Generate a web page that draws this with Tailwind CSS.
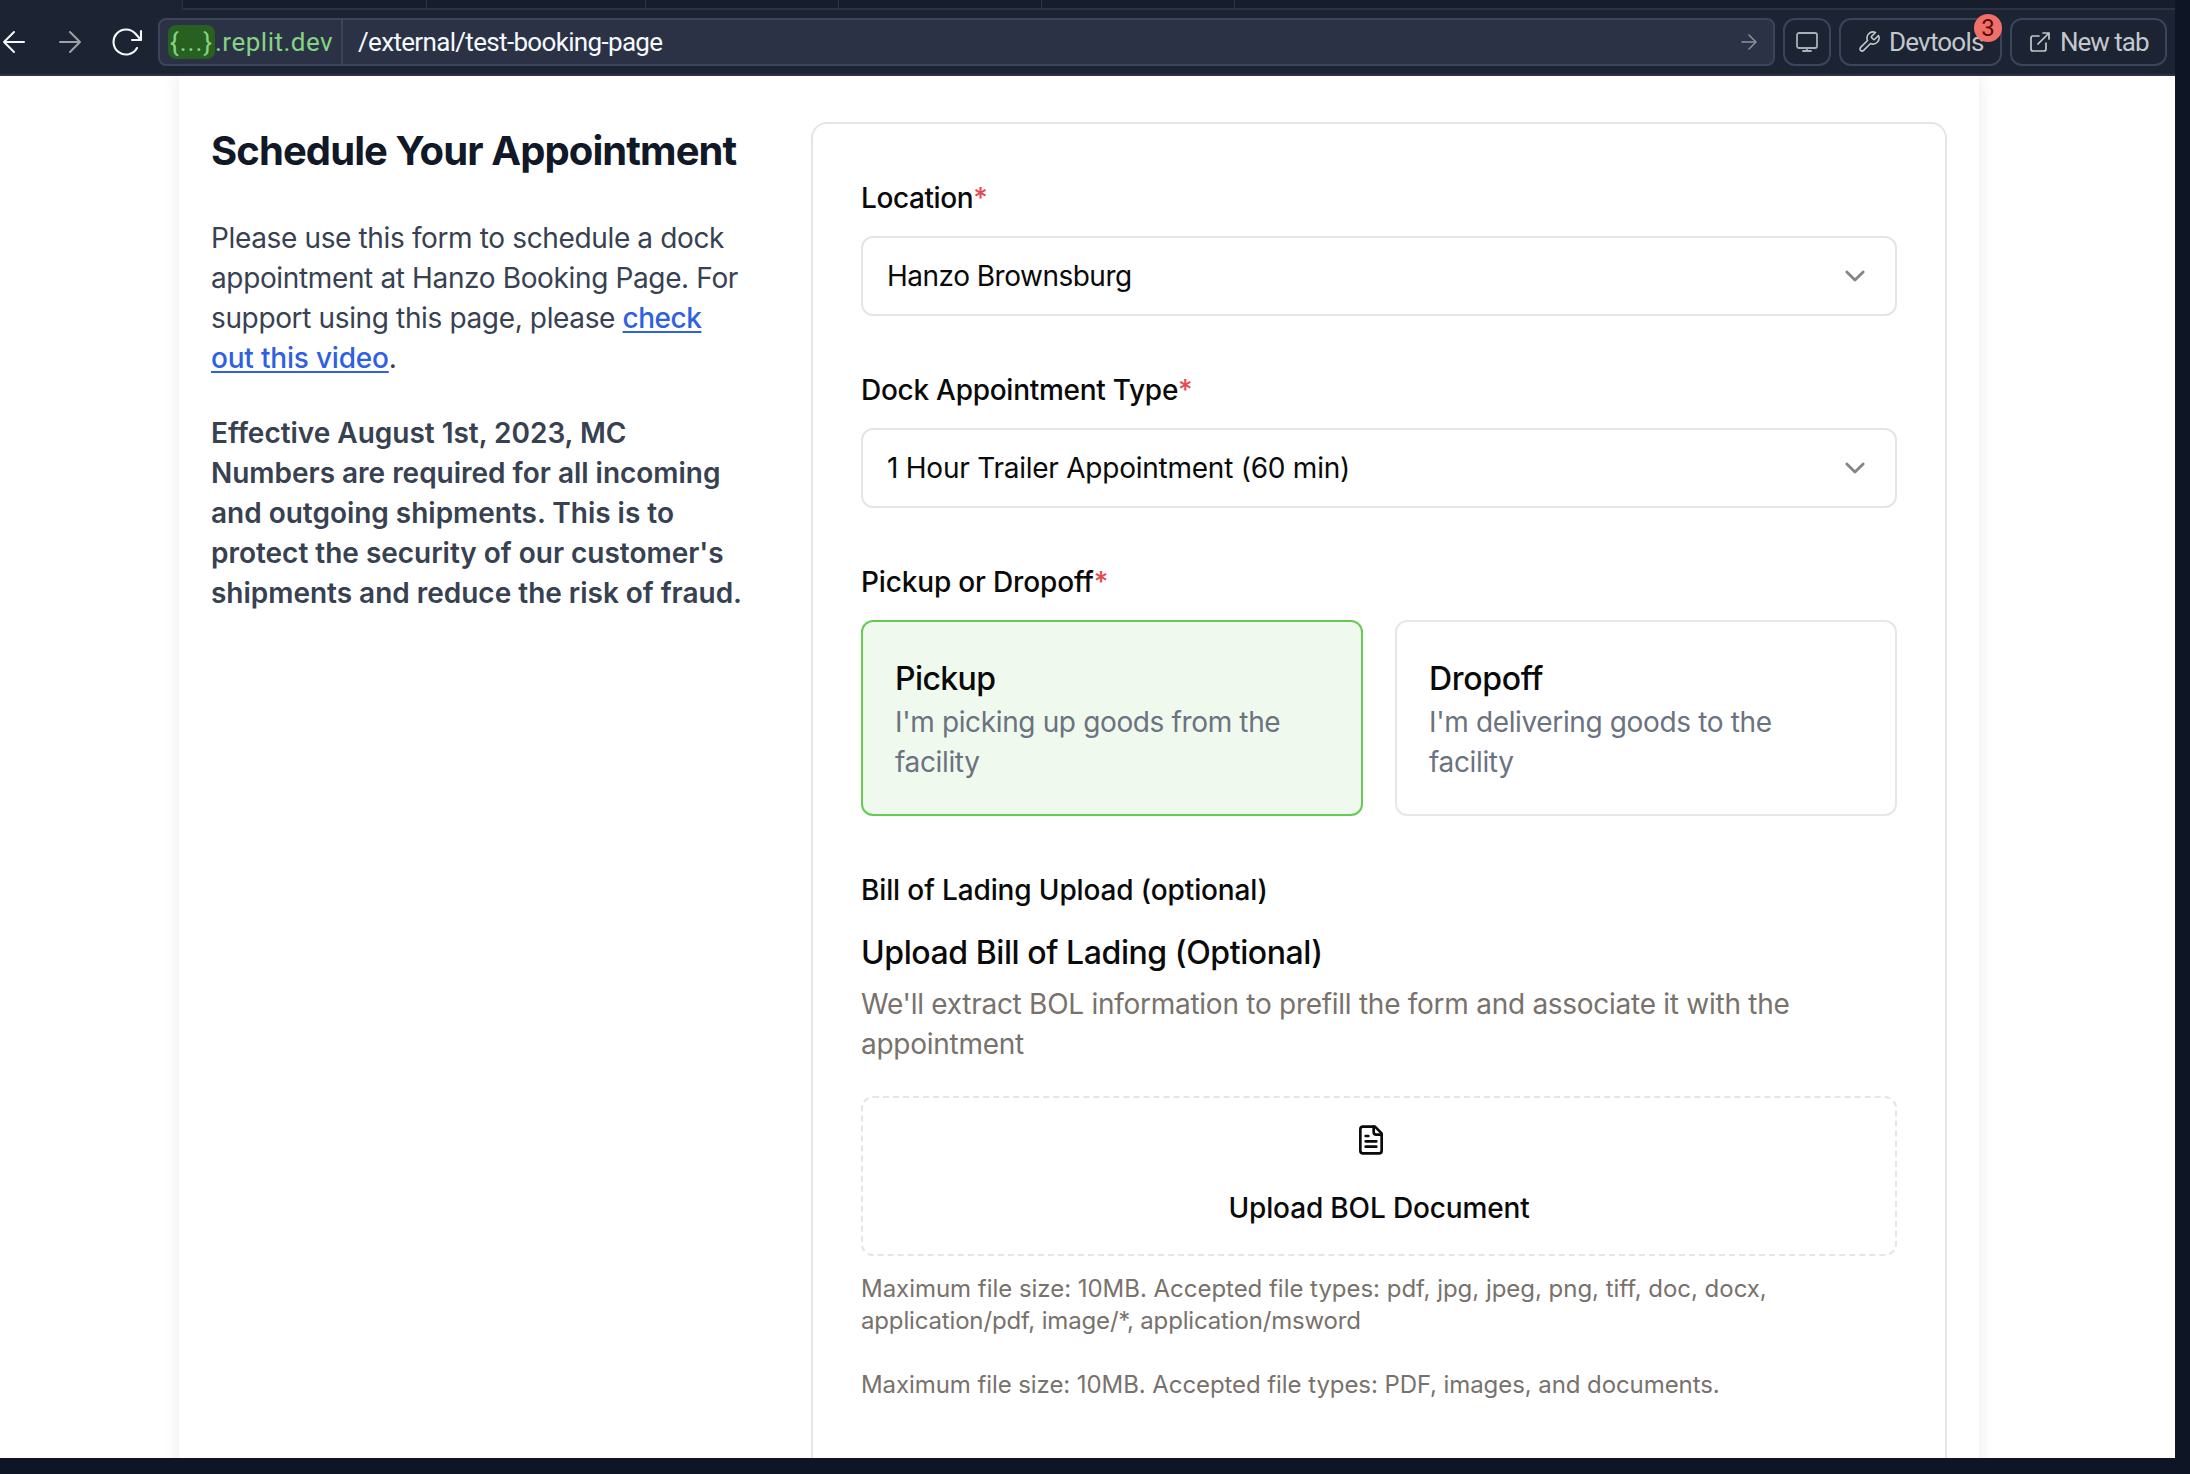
<!DOCTYPE html>
<html lang="en">
<head>
<meta charset="utf-8">
<title>Schedule Your Appointment</title>
<script src="https://cdn.jsdelivr.net/npm/@tailwindcss/browser@4"></script>
</head>
<body class="h-[1474px] w-[2190px] overflow-hidden bg-[#0e1525] font-['Inter',sans-serif]">
<div class="flex h-[1458px] w-[2175px] flex-col overflow-hidden bg-white">
  <header class="relative z-10 flex h-[76px] shrink-0 flex-col border-b-2 border-[#2b3245] bg-[#1c2333]">
    <div class="ml-[182px] flex h-[10px] shrink-0 border-b-2 border-l border-[#2b3245] bg-[#171d2b]">
      <div class="w-[244px] border-r border-[#2b3245]"></div>
      <div class="w-[219px] border-r border-[#2b3245]"></div>
      <div class="w-[193px] border-r border-[#2b3245]"></div>
      <div class="w-[203px] border-r border-[#2b3245]"></div>
      <div class="w-[193px] border-r border-[#2b3245]"></div>
    </div>
    <nav class="mt-2 flex h-12 items-center pr-2 font-['Roboto',sans-serif] text-[26px] leading-8 text-[#f5f9fc]">
      <svg class="ml-0.5 h-6 w-6" viewBox="0 0 24 24" fill="none" stroke="currentColor" stroke-width="2" stroke-linecap="round" stroke-linejoin="round"><path d="M22 12H2M12 2 2 12l10 10"/></svg>
      <svg class="ml-8 h-6 w-6 text-[#9da2a6]" viewBox="0 0 24 24" fill="none" stroke="currentColor" stroke-width="2" stroke-linecap="round" stroke-linejoin="round"><path d="M2 12h20M12 2l10 10-10 10"/></svg>
      <svg class="ml-[30px] h-8 w-8" viewBox="0 0 32 32" fill="none" stroke="currentColor" stroke-width="2.1" stroke-linecap="round" stroke-linejoin="round"><path d="M29 5v9H20M29 14 23.500 7.800A12.500 12.500 0 1 0 25 22"/></svg>
      <div class="ml-[14px] flex h-12 w-[1617px] items-center rounded-lg border-2 border-[#3c445c] bg-[#2b3245]">
        <div class="flex h-full w-[183px] items-center border-r-2 border-[#3c445c] pl-2 text-[#84d282]">
          <span class="flex h-[34px] w-[47px] items-center justify-center rounded-lg bg-[#276020] tracking-[1px]">{...}</span><span class="tracking-[0.5px]">.replit.dev</span>
        </div>
        <span class="ml-[15px] tracking-[-0.67px]">/external/test-booking-page</span>
        <svg class="mr-4 ml-auto h-4 w-4 text-[#8d9199]" viewBox="0 0 16 16" fill="none" stroke="currentColor" stroke-width="1.5" stroke-linecap="round" stroke-linejoin="round"><path d="M1 8h14M8 1l7 7-7 7"/></svg>
      </div>
      <div class="ml-2 flex h-12 w-12 items-center justify-center rounded-xl border-2 border-[#3c445c] text-[#a9afb5]">
        <svg class="h-6 w-6" viewBox="0 0 24 24" fill="none" stroke="currentColor" stroke-width="1.8" stroke-linecap="round" stroke-linejoin="round"><rect x="2" y="3" width="20" height="15" rx="2"/><path d="M8 21h8M12 18v3"/></svg>
      </div>
      <div class="relative ml-2 flex h-12 w-[163px] items-center rounded-xl border-2 border-[#3c445c] pl-4 text-[#c2c8cc]">
        <svg class="mr-2 h-6 w-6" viewBox="0 0 24 24" fill="none" stroke="currentColor" stroke-width="1.6" stroke-linecap="round" stroke-linejoin="round"><path d="M14.700 6.300a1 1 0 0 0 0 1.400l1.600 1.600a1 1 0 0 0 1.400 0l3.770-3.770a6 6 0 0 1-7.940 7.940l-6.910 6.910a2.120 2.120 0 0 1-3-3l6.910-6.910a6 6 0 0 1 7.940-7.940z"/></svg>
        <span class="tracking-[-0.8px]">Devtools</span>
        <span class="absolute -top-[6px] -right-[2px] flex h-7 w-7 items-center justify-center rounded-full bg-[#ef7069] text-[24px] text-[#5a0a0a]">3</span>
      </div>
      <div class="ml-2 flex h-12 w-[157px] items-center rounded-xl border-2 border-[#3c445c] pl-4 text-[#c2c8cc]">
        <svg class="mr-2 h-6 w-6" viewBox="0 0 24 24" fill="none" stroke="currentColor" stroke-width="1.7" stroke-linecap="round" stroke-linejoin="round"><path d="M18 13v6a2 2 0 0 1-2 2H5a2 2 0 0 1-2-2V8a2 2 0 0 1 2-2h6M15 3h6v6M10 14 21 3"/></svg>
        <span class="tracking-[-1px]">New tab</span>
      </div>
    </nav>
  </header>

  <main class="ml-[179px] flex w-[1800px] flex-1 items-start bg-white pt-[46px] pr-8 pl-8 text-[28px] leading-10 tracking-[-0.36px] text-[#0a0a0a] shadow-[0_0_16px_rgba(0,0,0,0.09)]">
    <section class="w-[600px] shrink-0 text-[#374151]">
      <h1 class="pt-px text-[40px] leading-[56px] font-bold tracking-[-0.9px] text-[#111827]">Schedule Your Appointment</h1>
      <p class="mt-[39px]">Please use this form to schedule a dock<br>appointment at Hanzo Booking Page. For<br>support using this page, please <a class="font-medium text-[#2f5fe3] underline decoration-2 underline-offset-[3px]"><span class="tracking-[-0.5px]">check</span><br><span class="tracking-[-0.2px]">out this video</span></a>.</p>
      <p class="mt-[35px] font-semibold tracking-[-0.02px]">Effective August 1st, 2023, MC<br>Numbers are required for all incoming<br>and outgoing shipments. This is to<br>protect the security of our customer's<br>shipments and reduce the risk of fraud.</p>
    </section>

    <section class="h-[1400px] w-[1136px] shrink-0 rounded-2xl border-2 border-[#e5e5e5] pt-[54px] pl-12">
      <div class="flex w-[1036px] flex-col">
        <label class="font-medium tracking-[-0.4px]">Location<span class="text-[#e5484d]">*</span></label>
        <div class="mt-[18px] flex h-20 items-center rounded-xl border-2 border-[#e5e5e5] pr-[26px] pl-6">
          <span class="tracking-[-0.5px]">Hanzo Brownsburg</span>
          <svg class="ml-auto h-7 w-7 text-[#848484]" viewBox="0 0 24 24" fill="none" stroke="currentColor" stroke-width="2.4" stroke-linecap="round" stroke-linejoin="round"><path d="m5 8.500 7 7 7-7"/></svg>
        </div>

        <label class="mt-[54px] font-medium tracking-[-0.27px]">Dock Appointment Type<span class="text-[#e5484d]">*</span></label>
        <div class="mt-[18px] flex h-20 items-center rounded-xl border-2 border-[#e5e5e5] pr-[26px] pl-6">
          <span class="tracking-[-0.24px]">1 Hour Trailer Appointment (60 min)</span>
          <svg class="ml-auto h-7 w-7 text-[#848484]" viewBox="0 0 24 24" fill="none" stroke="currentColor" stroke-width="2.4" stroke-linecap="round" stroke-linejoin="round"><path d="m5 8.500 7 7 7-7"/></svg>
        </div>

        <label class="mt-[54px] font-medium tracking-[-0.16px]">Pickup or Dropoff<span class="text-[#e5484d]">*</span></label>
        <div class="mt-[18px] grid grid-cols-2 gap-8">
          <div class="h-[196px] rounded-xl border-2 border-[#66cb54] bg-[#f0f9ee] p-8">
            <h3 class="pt-px text-[32px] leading-[47px] font-medium tracking-[-0.6px]">Pickup</h3>
            <p class="text-[#6b7280]">I'm picking up goods from the<br>facility</p>
          </div>
          <div class="h-[196px] rounded-xl border-2 border-[#e5e7eb] p-8">
            <h3 class="pt-px text-[32px] leading-[47px] font-medium tracking-[-0.3px]">Dropoff</h3>
            <p class="text-[#6b7280]">I'm delivering goods to the<br>facility</p>
          </div>
        </div>

        <label class="mt-[54px] font-medium tracking-[-0.13px]">Bill of Lading Upload (optional)</label>
        <h3 class="mt-[19px] text-[32px] leading-[48px] font-medium tracking-[-0.42px]">Upload Bill of Lading (Optional)</h3>
        <p class="mt-[7px] tracking-[-0.27px] text-[#78716c]">We'll extract BOL information to prefill the form and associate it with the<br>appointment</p>
        <div class="mt-8 flex h-40 flex-col items-center rounded-xl border-2 border-dashed border-[#e5e5e5] pt-[26px]">
          <svg class="mr-4 h-8 w-8" viewBox="0 0 24 24" fill="none" stroke="currentColor" stroke-width="2" stroke-linecap="round" stroke-linejoin="round"><path d="M15 2H6a2 2 0 0 0-2 2v16a2 2 0 0 0 2 2h12a2 2 0 0 0 2-2V7Z"/><path d="M14 2v4a2 2 0 0 0 2 2h4M10 9H8M16 13H8M16 17H8"/></svg>
          <span class="mt-8 font-medium tracking-[-0.15px]">Upload BOL Document</span>
        </div>
        <p class="mt-[17px] text-[24px] leading-8 tracking-[-0.03px] text-[#78716c]">Maximum file size: 10MB. Accepted file types: pdf, jpg, jpeg, png, tiff, doc, docx,<br><span class="tracking-[-0.16px]">application/pdf, image/*, application/msword</span></p>
        <p class="mt-8 text-[24px] leading-8 tracking-[-0.08px] text-[#78716c]">Maximum file size: 10MB. Accepted file types: PDF, images, and documents.</p>
      </div>
    </section>
  </main>
</div>
</body>
</html>
